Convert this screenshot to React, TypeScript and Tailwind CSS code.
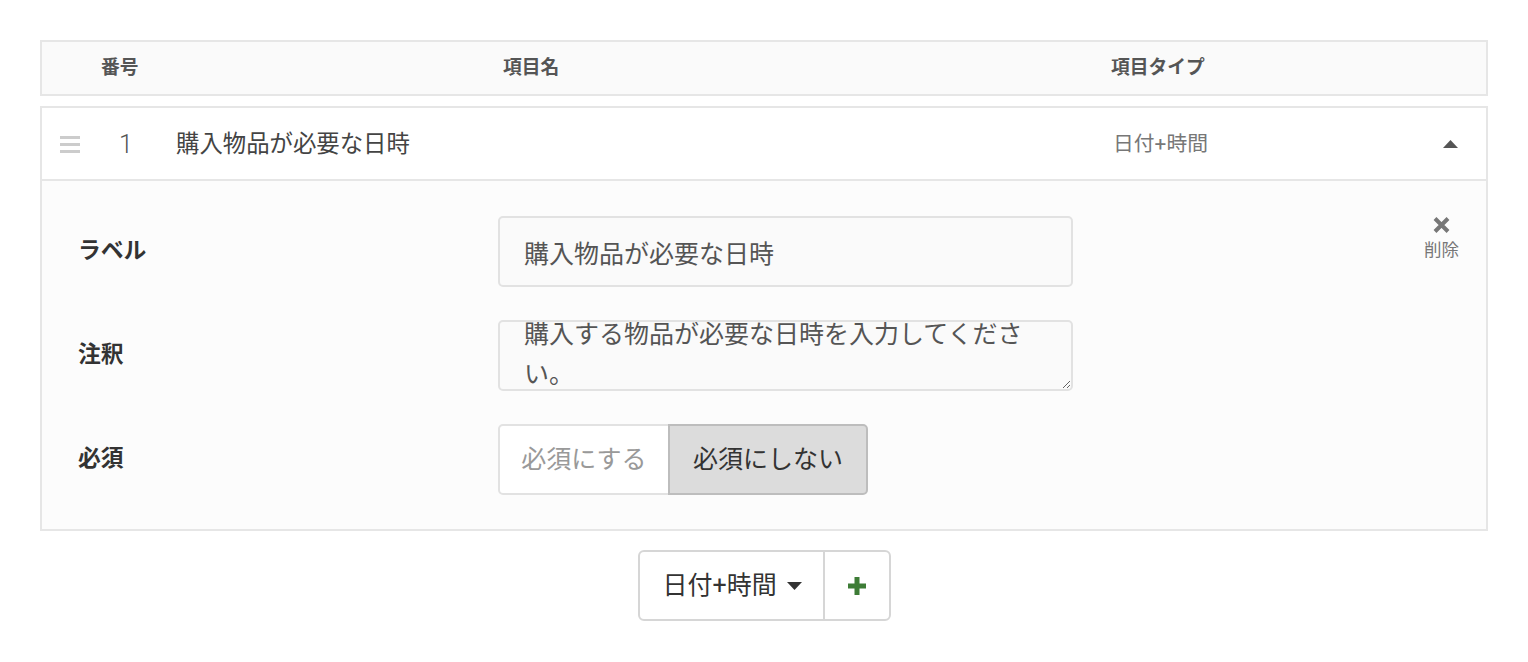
import React, { useEffect, useRef, useState } from 'react';

const FONT = { fontFamily: '"Roboto", "Noto Sans CJK JP", sans-serif' };

const DeleteIcon = () => (
  <svg width="17" height="16" viewBox="0 0 17 16">
    <path d="M2 1.5 L15 14.5 M15 1.5 L2 14.5" stroke="#777" strokeWidth="4" />
  </svg>
);

const PlusIcon = () => (
  <svg width="20" height="20" viewBox="0 0 20 20">
    <path d="M10 1 V19 M1 10 H19" stroke="#3d7c36" strokeWidth="5" />
  </svg>
);

const Caret = ({ up = false, color = '#333' }: { up?: boolean; color?: string }) => (
  <svg width="15" height="8" viewBox="0 0 15 8">
    <path d={up ? 'M0 8 L7.5 0 L15 8 Z' : 'M0 0 L7.5 8 L15 0 Z'} fill={color} />
  </svg>
);

const App: React.FC = () => {
  const [required, setRequired] = useState(false);
  const [label, setLabel] = useState('購入物品が必要な日時');
  const [note, setNote] = useState('購入する物品が必要な日時を入力してください。');
  const noteRef = useRef<HTMLTextAreaElement>(null);

  useEffect(() => {
    // textarea is shown scrolled a little in the original
    if (noteRef.current) noteRef.current.scrollTop = 19;
  }, []);

  return (
    <div style={FONT} className="min-h-[662px] bg-white px-[40px] pt-[40px]">
      {/* Table header */}
      <div className="flex h-[56px] items-center border-2 border-[#e6e6e6] bg-[#fafafa] text-[18.75px] font-bold text-[#555]">
        <div className="w-[461px] pl-[59px]">番号</div>
        <div className="w-[608px]">項目名</div>
        <div className="flex-1">項目タイプ</div>
      </div>

      {/* Field item */}
      <div className="mt-[10px] border-2 border-[#e6e6e6]">
        <div className="flex h-[73px] items-center border-b-2 border-[#e6e6e6] bg-white pt-[2px]">
          <div className="ml-[18px] flex w-[20px] flex-col gap-[4px]">
            <span className="h-[3px] bg-[#cccccc]" />
            <span className="h-[3px] bg-[#cccccc]" />
            <span className="h-[3px] bg-[#cccccc]" />
          </div>
          <div className="ml-[39px] w-[57px] text-[25px] font-light text-[#555]">1</div>
          <div className="w-[937px] text-[23.4px] text-[#444]">購入物品が必要な日時</div>
          <div className="w-[330px] text-[20.8px] text-[#777]">日付+時間</div>
          <div className="mt-[-2px]">
            <Caret up color="#555" />
          </div>
        </div>

        <div className="flex bg-[#fcfcfc] pb-[34px] pl-[36px] pt-[35px]">
          <div className="flex flex-col gap-[33px]">
            <div className="flex h-[71px] items-center">
              <div className="w-[420px] text-[22.8px] font-bold text-[#333]">ラベル</div>
              <input
                value={label}
                onChange={e => setLabel(e.target.value)}
                className="h-[71px] w-[575px] rounded-[5px] border-2 border-[#e2e2e2] bg-[#fafafa] px-[24px] text-[25px] text-[#555] outline-none"
              />
            </div>
            <div className="flex h-[71px] items-center">
              <div className="w-[420px] text-[22.8px] font-bold text-[#333]">注釈</div>
              <textarea
                ref={noteRef}
                value={note}
                onChange={e => setNote(e.target.value)}
                className="h-[71px] w-[575px] resize-y overflow-hidden rounded-[5px] border-2 border-[#e2e2e2] bg-[#fafafa] px-[24px] py-[12px] text-[25px] leading-[40px] text-[#555] outline-none"
              />
            </div>
            <div className="flex h-[71px] items-center">
              <div className="w-[420px] text-[22.8px] font-bold text-[#333]">必須</div>
              <div className="flex h-[71px] text-[25px]">
                <button
                  onClick={() => setRequired(true)}
                  className={`w-[172px] rounded-l-[5px] border-2 ${
                    required ? 'border-[#bdbdbd] bg-[#dcdcdc] text-[#333]' : 'border-[#e2e2e2] bg-white text-[#999]'
                  }`}
                >
                  必須にする
                </button>
                <button
                  onClick={() => setRequired(false)}
                  className={`-ml-[2px] w-[200px] rounded-r-[5px] border-2 ${
                    !required ? 'border-[#bdbdbd] bg-[#dcdcdc] text-[#333]' : 'border-[#e2e2e2] bg-white text-[#999]'
                  }`}
                >
                  必須にしない
                </button>
              </div>
            </div>
          </div>

          <div className="flex flex-1 justify-end pr-[27px]">
            <button className="flex h-fit flex-col items-center pt-[1px] text-[17.5px] text-[#777]">
              <DeleteIcon />
              <span className="mt-[6px] leading-[22px]">削除</span>
            </button>
          </div>
        </div>
      </div>

      {/* Add field */}
      <div className="mt-[19px] flex justify-center">
        <div className="flex h-[71px] rounded-[6px] border-2 border-[#d6d6d6] bg-white">
          <button className="flex w-[183px] items-center gap-[10px] pl-[23px] text-[25px] text-[#333]">
            日付+時間
            <Caret />
          </button>
          <button className="flex w-[66px] items-center justify-center border-l-2 border-[#d6d6d6]">
            <PlusIcon />
          </button>
        </div>
      </div>
    </div>
  );
};

export default App;
